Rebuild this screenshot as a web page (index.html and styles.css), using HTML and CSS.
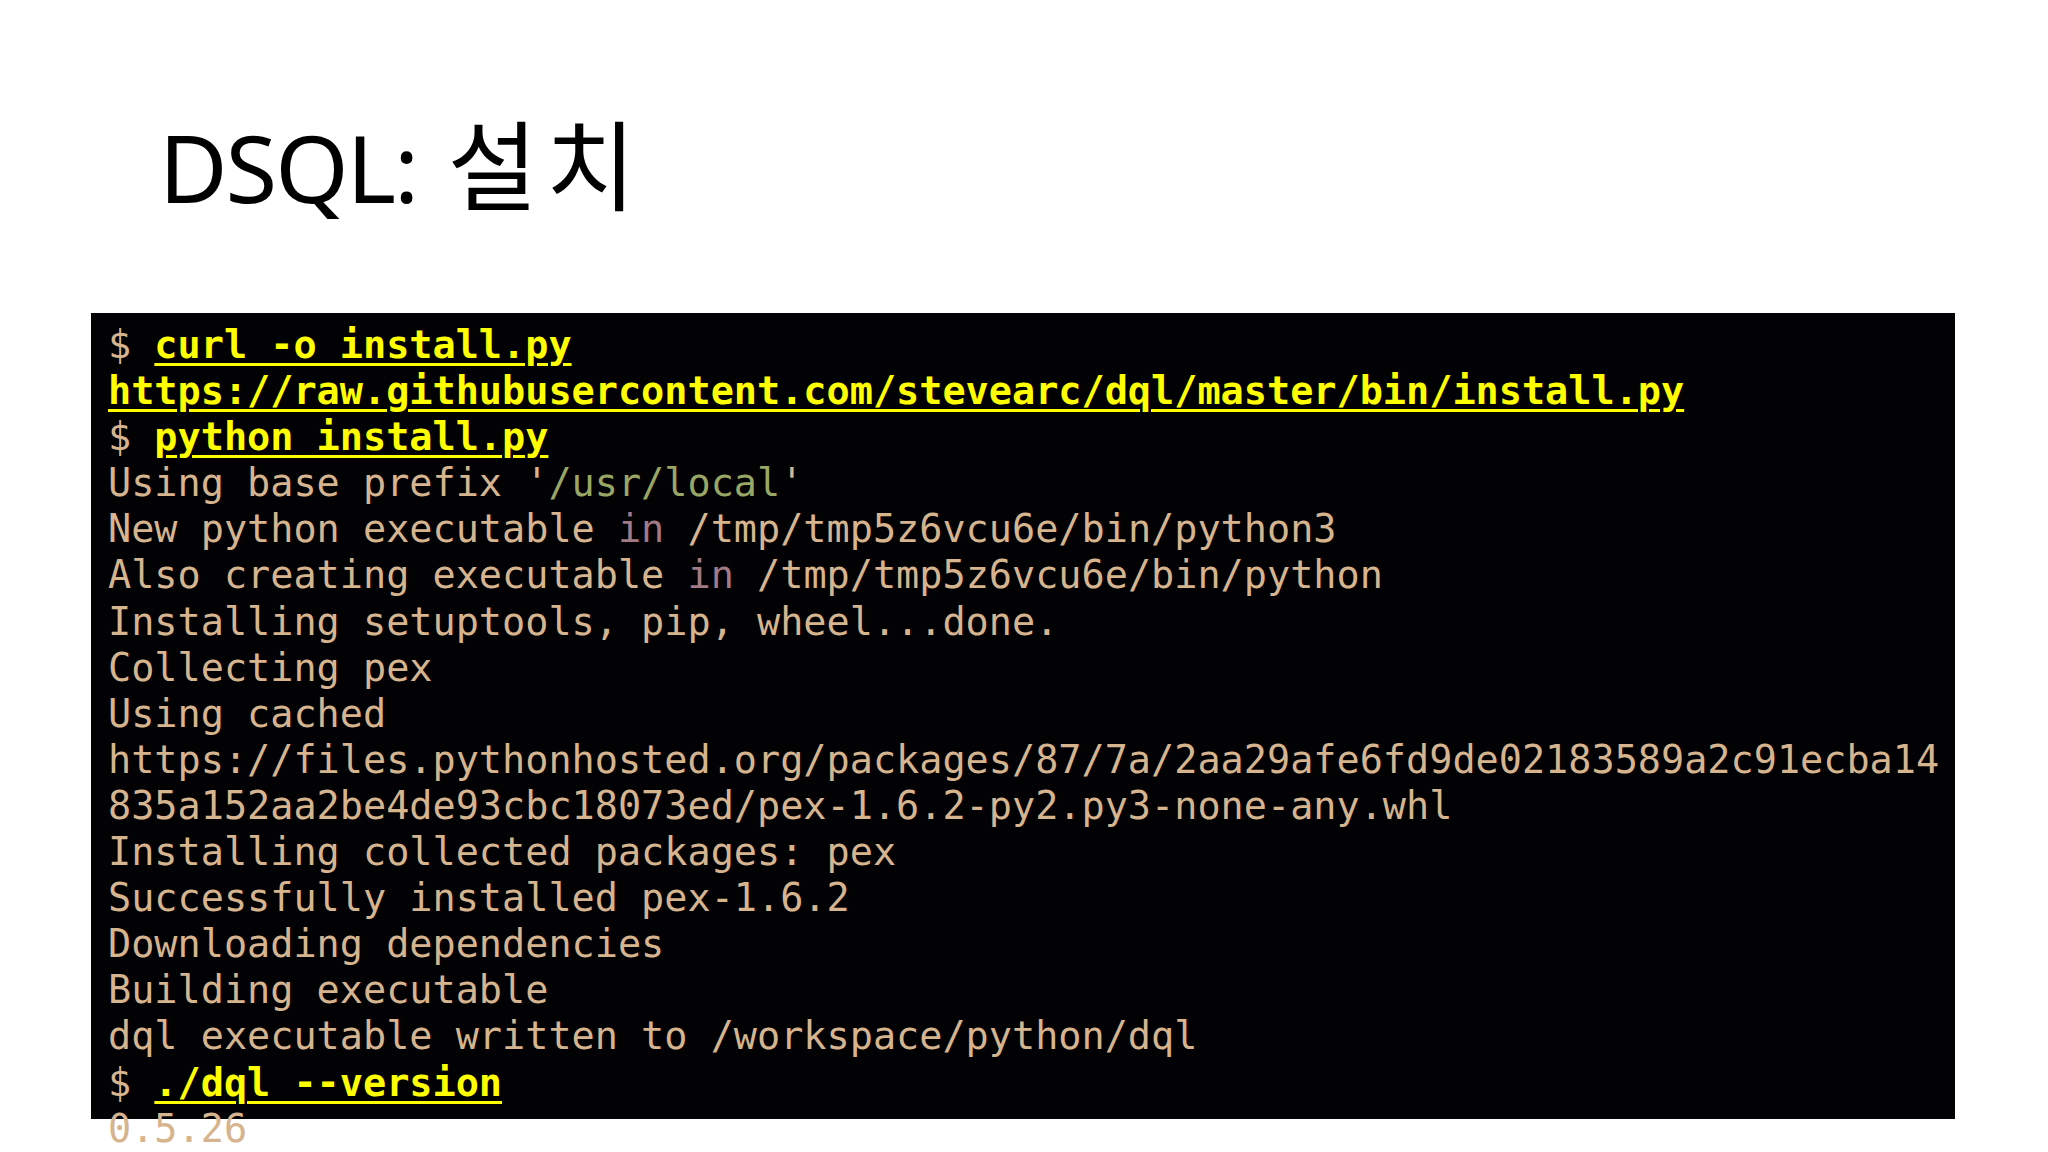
FILE: index.html
```html
<!DOCTYPE html>
<html lang="ko">

<head>
    <meta charset="UTF-8">
    <meta name="viewport" content="width=device-width, initial-scale=1.0">
    <title>DSQL: 설치</title>
    <link rel="stylesheet" href="styles.css">
</head>

<body>
    <div class="slide">
        <h1 class="slide-title">DSQL: <span class="ko">설치</span></h1>

        <!-- Saída do terminal -->
        <pre class="terminal"><span class="prompt">$ </span><span class="cmd">curl -o install.py</span>
<span class="cmd">https://raw.githubusercontent.com/stevearc/dql/master/bin/install.py</span>
<span class="prompt">$ </span><span class="cmd">python install.py</span>
Using base prefix '<span class="str">/usr/local</span>'
New python executable <span class="kw">in</span> /tmp/tmp5z6vcu6e/bin/python3
Also creating executable <span class="kw">in</span> /tmp/tmp5z6vcu6e/bin/python
Installing setuptools, pip, wheel...done.
Collecting pex
Using cached
https://files.pythonhosted.org/packages/87/7a/2aa29afe6fd9de02183589a2c91ecba14
835a152aa2be4de93cbc18073ed/pex-1.6.2-py2.py3-none-any.whl
Installing collected packages: pex
Successfully installed pex-1.6.2
Downloading dependencies
Building executable
dql executable written to /workspace/python/dql
<span class="prompt">$ </span><span class="cmd">./dql --version</span>
0.5.26</pre>
    </div>
</body>

</html>
```

FILE: styles.css
```css
html,
body {
    margin: 0;
    padding: 0;
    background-color: #fff;
    font-family: "Noto Sans", "Noto Sans CJK KR", sans-serif;
}

body {
    min-height: 1152px;
}

.slide {
    padding: 111px 0 60px 91px;
}

.slide-title {
    margin: 0 0 0 68px;
    font-family: "Noto Sans", "Noto Sans CJK KR", sans-serif;
    font-size: 94px;
    font-weight: 400;
    line-height: 1;
    letter-spacing: -2px;
    color: #000;
    height: 112px;
    white-space: nowrap;
}

.slide-title .ko {
    font-family: "Noto Sans CJK KR", sans-serif;
    font-size: 98px;
    letter-spacing: 8px;
    margin-left: 8px;
}

.terminal {
    margin: 90px 0 0 0;
    box-sizing: border-box;
    width: 1864px;
    height: 806px;
    padding: 9px 17px 0;
    background-color: #020103;
    color: #d6b48e;
    font-family: "DejaVu Sans Mono", "Liberation Mono", monospace;
    font-size: 38.5px;
    line-height: 46.1px;
    white-space: pre;
    overflow: visible;
}

.prompt {
    color: #d6b48e;
}

.cmd {
    color: #ffff00;
    font-weight: bold;
    text-decoration: underline;
    text-decoration-thickness: 3px;
    text-underline-offset: 5px;
}

.str {
    color: #9aa664;
}

.kw {
    color: #a27a86;
}
```
